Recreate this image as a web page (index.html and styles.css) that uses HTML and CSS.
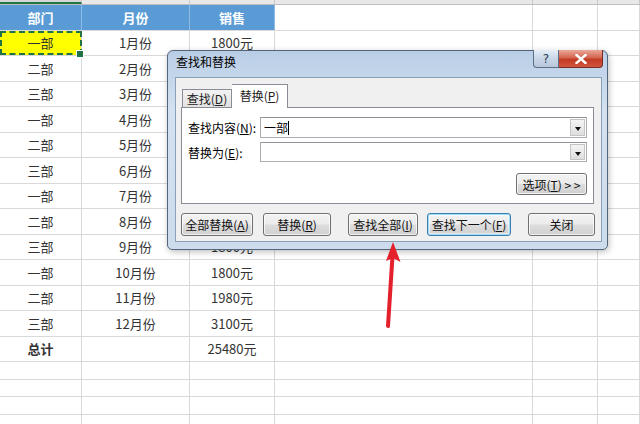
FILE: index.html
```html
<!DOCTYPE html>
<html lang="zh-CN">
<head>
<meta charset="UTF-8">
<title>查找和替换</title>
<link rel="stylesheet" href="styles.css">
</head>
<body>

<div class="sheet">
  <div class="colhead">
    <div class="ca on">A</div><div class="cb">B</div><div class="cc">C</div><div class="cd">D</div><div class="ce">E</div><div class="cf">F</div>
  </div>
  <div class="row head">
    <div class="ca">部门</div><div class="cb">月份</div><div class="cc">销售</div><div class="cd"></div><div class="ce"></div><div class="cf"></div>
  </div>
  <div class="row"><div class="ca sel">一部</div><div class="cb">1月份</div><div class="cc">1800元</div><div class="cd"></div><div class="ce"></div><div class="cf"></div></div>
  <!-- column C values of these rows sit under the dialog -->
  <div class="row"><div class="ca">二部</div><div class="cb">2月份</div><div class="cc"></div><div class="cd"></div><div class="ce"></div><div class="cf"></div></div>
  <div class="row"><div class="ca">三部</div><div class="cb">3月份</div><div class="cc"></div><div class="cd"></div><div class="ce"></div><div class="cf"></div></div>
  <div class="row"><div class="ca">一部</div><div class="cb">4月份</div><div class="cc"></div><div class="cd"></div><div class="ce"></div><div class="cf"></div></div>
  <div class="row"><div class="ca">二部</div><div class="cb">5月份</div><div class="cc"></div><div class="cd"></div><div class="ce"></div><div class="cf"></div></div>
  <div class="row"><div class="ca">三部</div><div class="cb">6月份</div><div class="cc"></div><div class="cd"></div><div class="ce"></div><div class="cf"></div></div>
  <div class="row"><div class="ca">一部</div><div class="cb">7月份</div><div class="cc"></div><div class="cd"></div><div class="ce"></div><div class="cf"></div></div>
  <div class="row"><div class="ca">二部</div><div class="cb">8月份</div><div class="cc"></div><div class="cd"></div><div class="ce"></div><div class="cf"></div></div>
  <div class="row"><div class="ca">三部</div><div class="cb">9月份</div><div class="cc">1800元</div><div class="cd"></div><div class="ce"></div><div class="cf"></div></div>
  <div class="row"><div class="ca">一部</div><div class="cb">10月份</div><div class="cc">1800元</div><div class="cd"></div><div class="ce"></div><div class="cf"></div></div>
  <div class="row"><div class="ca">二部</div><div class="cb">11月份</div><div class="cc">1980元</div><div class="cd"></div><div class="ce"></div><div class="cf"></div></div>
  <div class="row"><div class="ca">三部</div><div class="cb">12月份</div><div class="cc">3100元</div><div class="cd"></div><div class="ce"></div><div class="cf"></div></div>
  <div class="row"><div class="ca total">总计</div><div class="cb"></div><div class="cc">25480元</div><div class="cd"></div><div class="ce"></div><div class="cf"></div></div>
  <div class="row sm"><div class="ca"></div><div class="cb"></div><div class="cc"></div><div class="cd"></div><div class="ce"></div><div class="cf"></div></div>
  <div class="row sm"><div class="ca"></div><div class="cb"></div><div class="cc"></div><div class="cd"></div><div class="ce"></div><div class="cf"></div></div>
  <div class="row sm"><div class="ca"></div><div class="cb"></div><div class="cc"></div><div class="cd"></div><div class="ce"></div><div class="cf"></div></div>
  <div class="row sm"><div class="ca"></div><div class="cb"></div><div class="cc"></div><div class="cd"></div><div class="ce"></div><div class="cf"></div></div>
</div>

<!-- find & replace window -->
<div class="dialog">
  <div class="titlebar">
    <span class="title">查找和替换</span>
    <div class="capbtns">
      <span class="help">?</span>
      <span class="close">
        <svg width="12" height="10" viewBox="0 0 12 10"><path d="M1.5 1 L10.5 9 M10.5 1 L1.5 9" stroke="#fff" stroke-width="2.4" stroke-linecap="square"/></svg>
      </span>
    </div>
  </div>
  <div class="client">
    <div class="tabs">
      <span class="tab">查找(<u>D</u>)</span>
      <span class="tab on">替换(<u>P</u>)</span>
    </div>
    <div class="panel">
      <div class="field">
        <label>查找内容(<u>N</u>):</label>
        <div class="combo"><span class="val">一部</span><span class="caret"></span><span class="drop"></span></div>
      </div>
      <div class="field f2">
        <label>替换为(<u>E</u>):</label>
        <div class="combo"><span class="drop"></span></div>
      </div>
      <div class="opts"><span class="btn b-opt">选项(<u>T</u>) &gt; &gt;</span></div>
    </div>
    <div class="actions">
      <span class="btn b1">全部替换(<u>A</u>)</span>
      <span class="btn b2">替换(<u>R</u>)</span>
      <span class="btn b3">查找全部(<u>I</u>)</span>
      <span class="btn b4 focus">查找下一个(<u>F</u>)</span>
      <span class="btn b5">关闭</span>
    </div>
  </div>
</div>

<svg class="arrow" width="640" height="424" viewBox="0 0 640 424">
  <path d="M388 326 L392.5 256" stroke="#e3202b" stroke-width="4" stroke-linecap="round"/>
  <path d="M393 242 L400.5 262 L393 258 L386 261 Z" fill="#e3202b"/>
</svg>

</body>
</html>
```

FILE: styles.css
```css
* {
  box-sizing: border-box;
}
body {
  margin: 0;
  width: 640px;
  height: 424px;
  overflow: hidden;
  position: relative;
  background: #fff;
  color: #333;
  font-family: "Noto Sans CJK SC", "Noto Sans", sans-serif;
}

/* sheet grid */
.ca { width: 82px; }
.cb { width: 108px; }
.cc { width: 85px; }
.cd { width: 258px; }
.ce { width: 65px; }
.cf { flex: 1; }

.colhead {
  display: flex;
  height: 20px;
  margin-top: -15px;
  background: #e8e8e8;
  border-bottom: 1px solid #bdbdbd;
}
.colhead div {
  border-right: 1px solid #c9c9c9;
  text-align: center;
  font-family: "Liberation Sans", sans-serif;
  font-size: 13px;
  line-height: 13px;
  padding-top: 4px;
  color: #444;
}
.colhead .on {
  background: #d6d6d6;
  border-bottom: 2px solid #217346;
}

.row {
  display: flex;
  height: 25.5px;
  border-bottom: 1px solid #d9d9d9;
}
.row.sm {
  height: 17.5px;
}
.row > div {
  border-right: 1px solid #d9d9d9;
  display: flex;
  align-items: center;
  justify-content: center;
  font-size: 13px;
}
.row.head .ca,
.row.head .cb,
.row.head .cc {
  background: #5b9bd5;
  color: #fff;
  font-weight: bold;
  border-right-color: #8dbbe5;
}
.row .total {
  font-weight: bold;
}
.sel {
  position: relative;
  background: #ffff00;
  outline: 2px dashed #217346;
  outline-offset: -2px;
}
.sel::after {
  content: '';
  position: absolute;
  right: -3px;
  bottom: -3px;
  width: 6px;
  height: 6px;
  background: #217346;
  border: 1px solid #fff;
}

/* dialog window */
.dialog {
  position: absolute;
  left: 167px;
  top: 50px;
  width: 441px;
  height: 200px;
  border: 1px solid #52657b;
  border-radius: 6px 6px 5px 5px;
  background: linear-gradient(#b9cee6, #d3e1f0 30%, #cddcec 100%);
  box-shadow: 1px 2px 6px rgba(0,0,0,0.25);
  padding: 0 5px 7px 7px;
  display: flex;
  flex-direction: column;
  font-size: 12px;
  color: #000;
}
.titlebar {
  height: 26px;
  display: flex;
  align-items: flex-start;
}
.title {
  padding-top: 3px;
  margin-left: 1px;
  line-height: 16px;
}
.capbtns {
  margin-left: auto;
  margin-top: -1px;
  margin-right: -1px;
  display: flex;
  height: 18px;
}
.capbtns span {
  display: flex;
  align-items: center;
  justify-content: center;
  border: 1px solid #5d6f86;
  border-top: none;
}
.help {
  width: 26px;
  background: linear-gradient(#e6eef7, #c9d6e6 50%, #b8c8dc);
  border-radius: 0 0 0 4px;
  color: #2d3e52;
  font-family: "DejaVu Sans", sans-serif;
  font-size: 12px;
}
.close {
  width: 44px;
  background: linear-gradient(#eaa89a, #d4654f 45%, #c23a24 55%, #d1553f);
  border-left: none !important;
  border-color: #7a2c22 !important;
  border-radius: 0 0 4px 0;
}
.client {
  flex: 1;
  background: #f0f0f0;
  border: 1px solid #8aa0b8;
}
.tabs {
  display: flex;
  align-items: flex-end;
  padding: 5px 0 0 6px;
  height: 29px;
}
.tab {
  height: 18px;
  width: 50px;
  border: 1px solid #898c95;
  border-bottom: none;
  background: linear-gradient(#f3f3f3, #e1e1e1);
  display: flex;
  align-items: center;
  justify-content: center;
  color: #222;
}
.tab.on {
  height: 24px;
  width: 56px;
  border-left: none;
  background: #fff;
  margin-bottom: -1px;
  position: relative;
  padding-bottom: 2px;
}
.panel {
  margin: 0 7px 0 5px;
  height: 97px;
  border: 1px solid #898c95;
  background: #fff;
  padding: 9px 6px 0 6px;
}
.field {
  display: flex;
  height: 21px;
}
.field.f2 {
  margin-top: 4px;
  height: 20px;
}
.field label {
  width: 72px;
  line-height: 21px;
}
.combo {
  flex: 1;
  display: flex;
  align-items: center;
  border: 1px solid #abadb3;
  border-top-color: #8e9198;
  background: #fff;
  padding: 1px;
}
.val {
  padding-left: 2px;
  font-size: 12px;
}
.caret {
  width: 1px;
  height: 14px;
  background: #000;
}
.drop {
  margin-left: auto;
  width: 15px;
  height: 100%;
  border: 1px solid #c4c4c4;
  background: linear-gradient(#f4f4f4, #dedede);
  position: relative;
}
.drop::after {
  content: '';
  position: absolute;
  left: 4px;
  top: 7px;
  border-left: 3px solid transparent;
  border-right: 3px solid transparent;
  border-top: 4px solid #111;
}
.opts {
  display: flex;
  justify-content: flex-end;
  margin-top: 11px;
}
.btn {
  height: 23px;
  border: 1px solid #707070;
  border-radius: 3px;
  background: linear-gradient(#f3f3f3 0%, #ebebeb 48%, #dddddd 52%, #d0d0d0 100%);
  box-shadow: inset 0 0 0 1px rgba(255,255,255,0.7);
  display: flex;
  align-items: center;
  justify-content: center;
  color: #111;
  white-space: nowrap;
}
.b-opt {
  width: 71px;
  height: 22px;
}
.actions {
  display: flex;
  margin: 9px 0 0 5px;
}
.b1 { width: 72px; }
.b2 { width: 68px; margin-left: 10px; }
.b3 { width: 70px; margin-left: 17px; }
.b4 { width: 84px; margin-left: 9px; }
.b5 { width: 67px; margin-left: 17px; }
.btn.focus {
  border-color: #3c7fb1;
  box-shadow: inset 0 0 0 1px #9fdaf4, inset 0 0 0 2px rgba(255,255,255,0.5);
}

.arrow {
  position: absolute;
  left: 0;
  top: 0;
  pointer-events: none;
}
```
